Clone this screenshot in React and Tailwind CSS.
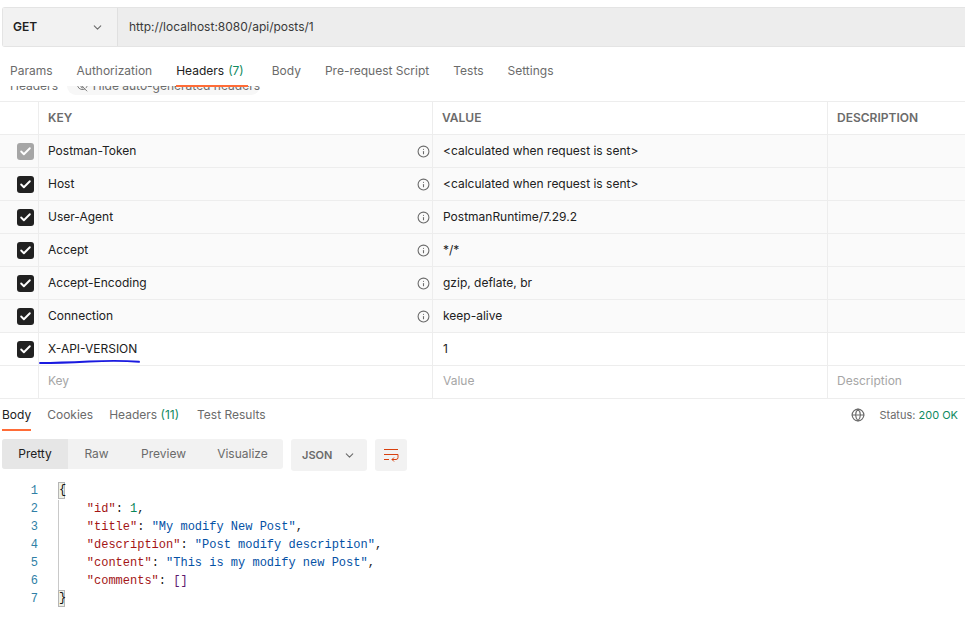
import React from "react";
import { Check, ChevronDown, EyeOff, Globe, Info } from "lucide-react";

const requestTabs = [
  { label: "Params" },
  { label: "Authorization" },
  { label: "Headers", count: "(7)", active: true },
  { label: "Body" },
  { label: "Pre-request Script" },
  { label: "Tests" },
  { label: "Settings" },
];

const headerRows = [
  { key: "Postman-Token", value: "<calculated when request is sent>", locked: true },
  { key: "Host", value: "<calculated when request is sent>" },
  { key: "User-Agent", value: "PostmanRuntime/7.29.2" },
  { key: "Accept", value: "*/*" },
  { key: "Accept-Encoding", value: "gzip, deflate, br" },
  { key: "Connection", value: "keep-alive" },
];

const Row = ({ children, className = "" }) => (
  <div className={`grid h-[33px] grid-cols-[39px_394px_395px_1fr] border-b border-[#ededed] ${className}`}>
    {children}
  </div>
);

const Cell = ({ children, className = "" }) => (
  <div className={`flex items-center border-r border-[#ededed] pl-[9px] last:border-r-0 ${className}`}>
    {children}
  </div>
);

const Checkbox = ({ muted }) => (
  <div className="flex items-center justify-center border-r border-[#ededed]">
    <span
      className={`ml-[12px] flex h-[17px] w-[17px] items-center justify-center rounded-[3px] ${muted ? "bg-[#a6a6a6]" : "bg-[#212121]"}`}
    >
      <Check size={13} strokeWidth={3.5} className="text-white" />
    </span>
  </div>
);

const Code = ({ n, children, bracket }) => (
  <div className="flex h-[18px] items-center">
    <span className="w-[38px] text-right text-[#2f7fa6]">{n}</span>
    <span className={`ml-[20px] h-[18px] whitespace-pre ${bracket ? "" : "shadow-[inset_1px_0_0_#c9c9c9]"}`}>
      {bracket ? (
        <span className="block h-[17px] w-[7px] border border-[#b5b5b5] bg-[#eef0e6] text-center leading-[15px] text-[#111]">
          {bracket}
        </span>
      ) : (
        children
      )}
    </span>
  </div>
);

const K = ({ children }) => <span className="text-[#a31515]">{children}</span>;
const S = ({ children }) => <span className="text-[#0451a5]">{children}</span>;

export default function App() {
  return (
    <div className="h-[628px] w-[965px] overflow-hidden bg-white font-['Inter',sans-serif] text-[12px] text-[#212121]">
      <div className="pl-[2px] pt-[7px]">
        <div className="flex h-[40px] rounded-l-[3px] border-y border-l border-[#e4e4e4] bg-[#ededed]">
          <div className="flex w-[115px] items-center border-r border-[#e0e0e0] bg-[#f2f2f2] pl-[10px] pr-[13px]">
            <span className="flex-1 font-semibold">GET</span>
            <ChevronDown size={13} className="text-[#6b6b6b]" />
          </div>
          <div className="flex items-center pl-[11px] text-[#3a3a3a]">http://localhost:8080/api/posts/1</div>
        </div>
      </div>

      <div className="relative z-10 flex h-[39px] gap-[24px] bg-white pl-[10px] pt-[11px] text-[#6b6b6b]">
        {requestTabs.map((tab) => (
          <div key={tab.label} className={`relative flex h-[26px] items-center ${tab.active ? "mr-[4px]" : ""}`}>
            <span className={tab.active ? "text-[#212121]" : ""}>{tab.label}</span>
            {tab.count && <span className="ml-1 text-[#0f8a5f]">{tab.count}</span>}
            {tab.active && <span className="absolute bottom-[-3px] left-0 h-[2px] w-[72px] bg-[#ff6c37]" />}
          </div>
        ))}
      </div>

      {/* header strip, scrolled most of the way under the tabs */}
      <div className="flex h-[9px] items-end overflow-hidden whitespace-nowrap">
        <div className="ml-[10px] flex h-[18px] shrink-0 items-center text-[#6b6b6b]">
          <span className="w-[57px]">Headers</span>
          <span className="flex h-[18px] w-[193px] items-center rounded-full bg-[#f7f7f7] pl-[10px]">
            <EyeOff size={13} className="mr-[5px]" />
            Hide auto-generated headers
          </span>
        </div>
      </div>

      <div className="mt-[6px] border-t border-[#ededed]">
        <Row className="font-semibold text-[#6b6b6b]">
          <Cell />
          <Cell className="pl-[7px]">KEY</Cell>
          <Cell className="pl-[8px]">VALUE</Cell>
          <Cell className="pl-[7px]">DESCRIPTION</Cell>
        </Row>
        {headerRows.map((row) => (
          <Row key={row.key} className="bg-[#fafafa]">
            <Checkbox muted={row.locked} />
            <Cell className="justify-between pr-[2px]">
              <span>{row.key}</span>
              <Info size={13} className="text-[#6b6b6b]" />
            </Cell>
            <Cell className="pl-[10px]">{row.value}</Cell>
            <Cell />
          </Row>
        ))}
        <Row>
          <Checkbox />
          <Cell className="relative">
            <span>X-API-VERSION</span>
            <svg className="absolute left-0 top-[26px]" width="102" height="6" viewBox="0 0 102 6" fill="none">
              <path d="M1 4 C 20 4, 30 3.5, 50 2.5 S 85 1.5, 100 2.8" stroke="#1a1ae0" strokeWidth="1.9" strokeLinecap="round" />
            </svg>
          </Cell>
          <Cell className="pl-[10px]">1</Cell>
          <Cell />
        </Row>
        <Row className="text-[#a6a6a6]">
          <div className="border-r border-[#ededed]" />
          <Cell className="pb-[2px]">Key</Cell>
          <Cell className="pb-[2px] pl-[10px]">Value</Cell>
          <Cell className="pb-[2px]">Description</Cell>
        </Row>
      </div>

      <div className="flex h-[32px] items-center pl-[2px] pr-[7px] text-[#6b6b6b]">
        <div className="relative flex h-full items-center">
          <span className="text-[#212121]">Body</span>
          <span className="absolute bottom-0 left-0 h-[2px] w-full bg-[#ff6c37]" />
        </div>
        <span className="ml-[16px]">Cookies</span>
        <span className="ml-[16px]">
          Headers <span className="text-[#0f8a5f]">(11)</span>
        </span>
        <span className="ml-[18px]">Test Results</span>
        <Globe size={14} className="ml-auto mr-[14px]" />
        <span className="text-[11px]">
          Status: <span className="text-[#0f8a5f]">200 OK</span>
        </span>
      </div>

      <div className="mt-[8px] flex h-[32px] items-start pl-[2px] text-[#6b6b6b]">
        <div className="flex h-[30px] w-[281px] overflow-hidden rounded-[3px] bg-[#f2f2f2]">
          <span className="flex w-[66px] items-center justify-center bg-[#e6e6e6] text-[#212121]">Pretty</span>
          <span className="flex w-[57px] items-center justify-center">Raw</span>
          <span className="flex w-[77px] items-center justify-center">Preview</span>
          <span className="flex flex-1 items-center justify-center">Visualize</span>
        </div>
        <div className="ml-[8px] flex h-[32px] w-[76px] items-center rounded-[3px] bg-[#f2f2f2] pl-[11px] text-[11px] font-semibold">
          <span className="flex-1">JSON</span>
          <ChevronDown size={13} className="mr-[11px]" />
        </div>
        <div className="ml-[8px] flex h-[32px] w-[32px] items-center justify-center rounded-[3px] bg-[#f2f2f2]">
          <svg width="16" height="14" viewBox="0 0 16 14" fill="none" stroke="#d8400e" strokeWidth="1">
            <path d="M1 1.5 H15" />
            <path d="M1 6.5 H15" />
            <path d="M1 11.5 H6" />
            <path d="M15 6.5 V9.5 A2 2 0 0 1 13 11.5 H9" />
            <path d="M11 9.5 L9 11.5 L11 13.5" />
          </svg>
        </div>
      </div>

      <div className="mt-[11px] font-['Liberation_Mono',monospace] text-[12px] leading-[18px] text-[#212121]">
        <Code n={1} bracket="{" />
        <Code n={2}>
          {"    "}<K>"id"</K>: <span className="text-[#098658]">1</span>,
        </Code>
        <Code n={3}>
          {"    "}<K>"title"</K>: <S>"My modify New Post"</S>,
        </Code>
        <Code n={4}>
          {"    "}<K>"description"</K>: <S>"Post modify description"</S>,
        </Code>
        <Code n={5}>
          {"    "}<K>"content"</K>: <S>"This is my modify new Post"</S>,
        </Code>
        <Code n={6}>
          {"    "}<K>"comments"</K>: <span className="text-[#5c1a6e]">[]</span>
        </Code>
        <Code n={7} bracket="}" />
      </div>
    </div>
  );
}
